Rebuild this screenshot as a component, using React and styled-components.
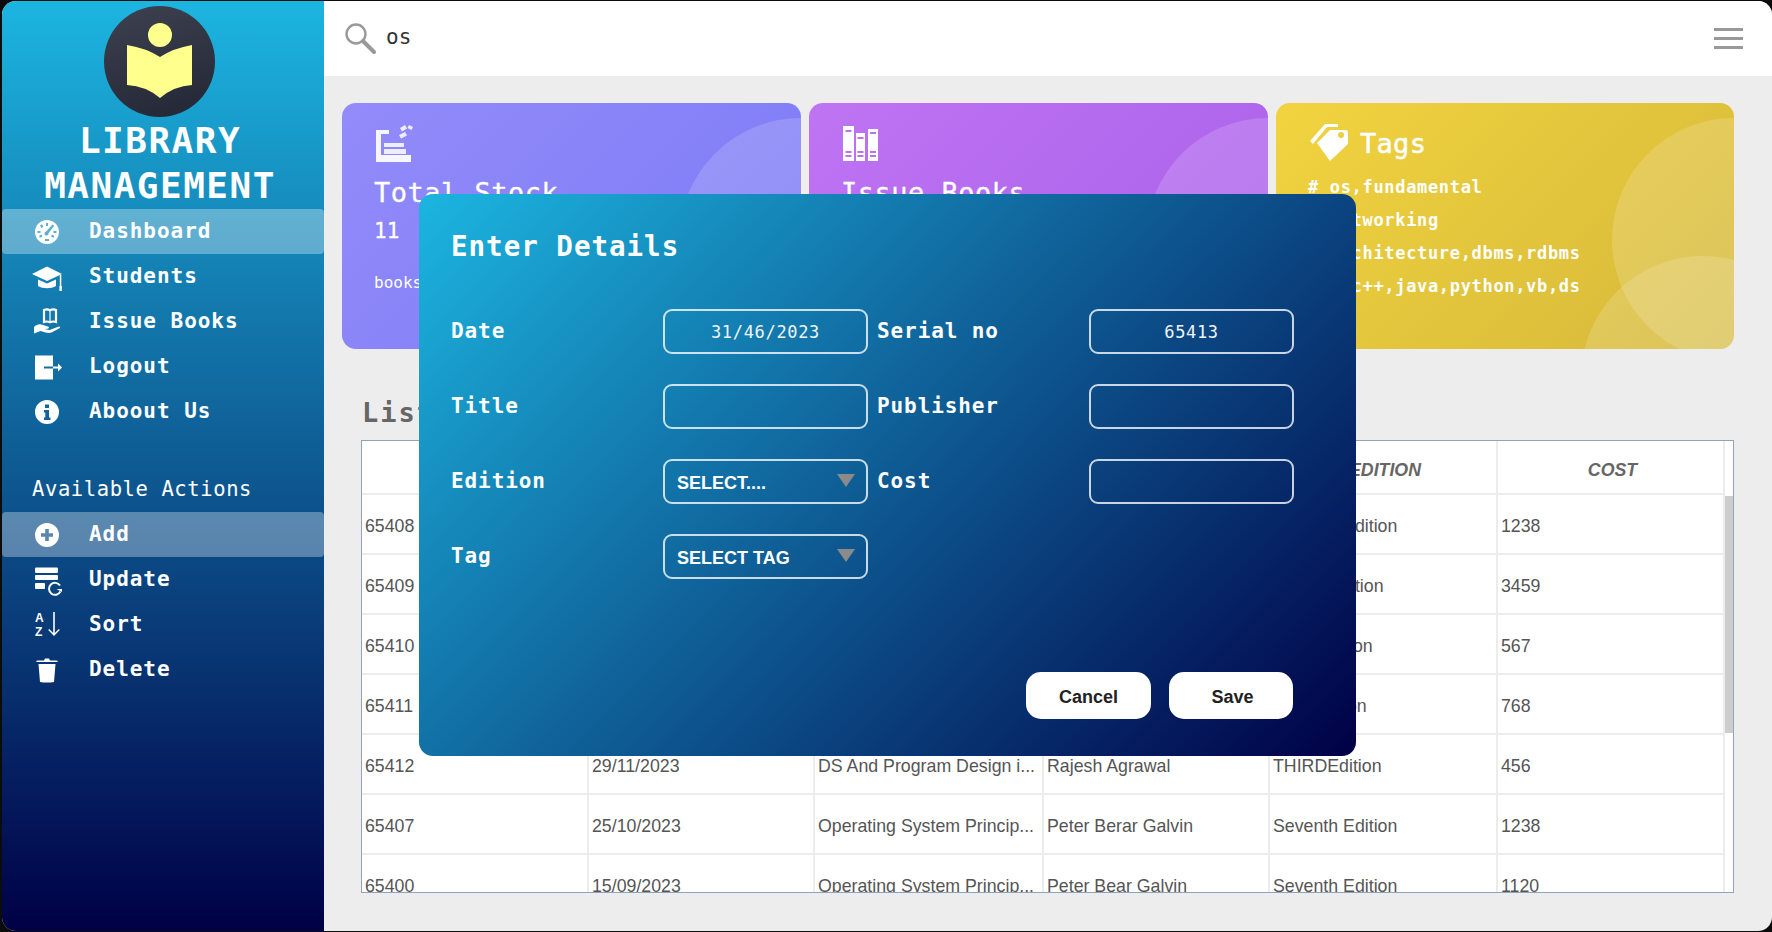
import React from "react";
import styled, { createGlobalStyle } from "styled-components";

const MONO = `"DejaVu Sans Mono", "Liberation Mono", monospace`;
const SANS = `"Liberation Sans", Arial, sans-serif`;

const Global = createGlobalStyle`
  html, body { margin: 0; padding: 0; background: #0c0c0c; height: 100%; overflow: hidden; }
  * { box-sizing: border-box; }
`;

const Frame = styled.div`
  position: relative;
  width: 1770px;
  height: 930px;
  margin: 1px 0 0 2px;
  border-radius: 14px;
  overflow: hidden;
  display: flex;
  background: #ededed;
  font-family: ${MONO};
`;

const Sidebar = styled.aside`
  width: 322px;
  flex: none;
  display: flex;
  flex-direction: column;
  color: #fff;
  background: linear-gradient(180deg, #1cb5e0 0%, #000046 100%);
`;

const LogoWrap = styled.div`
  display: flex;
  justify-content: center;
  padding: 5px 7px 0 0;
  height: 117px;
`;

const Brand = styled.h1`
  margin: 0;
  padding-right: 6px;
  font-size: 36px;
  line-height: 45px;
  height: 91px;
  font-weight: 700;
  letter-spacing: 1.5px;
  text-align: center;
`;

const MenuRow = styled.div`
  height: 45px;
  display: flex;
  align-items: center;
  gap: 28px;
  padding-left: 31px;
  border-radius: 4px;
  font-size: 21px;
  font-weight: 700;
  letter-spacing: 0.95px;
  background: ${(p) => (p.$active ? "rgba(255,255,255,0.32)" : "transparent")};
  span { position: relative; top: -1px; }
`;

const IconBox = styled.svg`
  width: 28px;
  height: 28px;
  flex: none;
  fill: #fff;
  overflow: visible;
`;

const SectionLabel = styled.div`
  margin-top: 43px;
  padding: 0 0 11px 30px;
  font-size: 20.5px;
  line-height: 24px;
  letter-spacing: 0.6px;
`;

const Main = styled.main`
  flex: 1;
  min-width: 0;
  display: flex;
  flex-direction: column;
`;

const Header = styled.header`
  height: 75px;
  flex: none;
  background: #fff;
  display: flex;
  align-items: center;
  justify-content: space-between;
  padding: 0 29px 0 20px;
`;

const Search = styled.div`
  display: flex;
  align-items: center;
  gap: 10px;
  color: #333;
  font-size: 21px;
  span { position: relative; top: -2px; }
`;

const Burger = styled.div`
  width: 29px;
  height: 21px;
  display: flex;
  flex-direction: column;
  justify-content: space-between;
  i { display: block; height: 3px; background: #999; }
`;

const Content = styled.div`
  flex: 1;
  padding: 27px 36px 0 18px;
`;

const Cards = styled.div`
  display: grid;
  grid-template-columns: 459px 459px 458px;
  gap: 8px;
`;

const Card = styled.section`
  position: relative;
  height: 246px;
  border-radius: 14px;
  overflow: hidden;
  color: #fff;
  padding: 21px 0 0 32px;
  background: ${(p) => p.$bg};
`;

const Bubble = styled.div`
  position: absolute;
  width: 244px;
  height: 244px;
  border-radius: 50%;
  background: rgba(255, 255, 255, 0.16);
  top: ${(p) => p.$top}px;
  right: ${(p) => p.$right}px;
`;

const CardIcon = styled.svg`
  display: block;
  margin-left: 1px;
  width: 38px;
  height: 40px;
  fill: #fff;
`;

const CardTitle = styled.div`
  margin-top: 9px;
  font-size: 27px;
  line-height: 40px;
  letter-spacing: 0.5px;
  -webkit-text-stroke: 0.3px #fff;
`;

const CardValue = styled.div`
  margin-top: 5px;
  font-size: 21px;
  line-height: 26px;
  -webkit-text-stroke: 0.3px #fff;
`;

const CardNote = styled.div`
  margin-top: 27px;
  font-size: 16px;
  line-height: 24px;
`;

const TagHead = styled.div`
  display: flex;
  align-items: center;
  gap: 11px;
  margin: 0 0 0 2px;
  svg { width: 39px; height: 39px; fill: #fff; flex: none; }
  span { font-size: 27px; letter-spacing: 0.3px; -webkit-text-stroke: 0.5px #fff; }
`;

const TagList = styled.div`
  margin: 8px 0 0 0;
  font-size: 17px;
  font-weight: 700;
  line-height: 33px;
  letter-spacing: 0.67px;
`;

const ListHeading = styled.h2`
  margin: 47px 0 10px 20px;
  font-size: 27px;
  line-height: 34px;
  font-weight: 700;
  letter-spacing: 2px;
  color: #666;
`;

const TableBox = styled.div`
  width: 1373px;
  height: 453px;
  margin-left: 19px;
  border: 1px solid #8fa3bb;
  background: #fff;
  display: flex;
  overflow: hidden;
  font-family: ${SANS};
`;

const TableBody = styled.div`
  width: 1363px;
  flex: none;
`;

const Row = styled.div`
  display: grid;
  grid-template-columns: 227px 226px 229px 226px 228px 227px;
  height: ${(p) => (p.$head ? "54px" : "60px")};
  border-bottom: 2px solid #ececec;
`;

const Cell = styled.div`
  display: flex;
  align-items: center;
  padding: 4px 0 0 3px;
  border-right: 2px solid #ececec;
  font-size: 17.75px;
  color: #555;
  white-space: nowrap;
  overflow: hidden;
`;

const HeadCell = styled(Cell)`
  justify-content: center;
  padding: 7px 0 0 4px;
  font-weight: 700;
  font-style: italic;
  color: #666;
`;

const Scrollbar = styled.div`
  flex: 1;
  padding-top: 55px;
  i { display: block; width: 100%; height: 237px; background: #cdcdcd; }
`;

const Modal = styled.div`
  position: absolute;
  left: 417px;
  top: 193px;
  width: 937px;
  height: 562px;
  border-radius: 14px;
  padding: 35px 63px 37px 32px;
  display: flex;
  flex-direction: column;
  color: #fff;
  background: linear-gradient(135deg, #1cb5e0 0%, #000046 100%);
`;

const ModalTitle = styled.h3`
  margin: 0 0 46px;
  font-size: 27.5px;
  line-height: 34px;
  font-weight: 700;
  letter-spacing: 1px;
`;

const Form = styled.div`
  display: grid;
  grid-template-columns: 212px 214px 212px 205px;
  grid-auto-rows: 45px;
  row-gap: 30px;
`;

const Label = styled.label`
  align-self: center;
  position: relative;
  top: -1px;
  font-size: 21px;
  font-weight: 700;
  letter-spacing: 0.9px;
`;

const Input = styled.input`
  width: 205px;
  height: 45px;
  border: 2px solid rgba(255, 255, 255, 0.78);
  border-radius: 9px;
  background: transparent;
  outline: none;
  color: #eef4f8;
  text-align: center;
  font-family: ${MONO};
  font-size: 17px;
  letter-spacing: 0.67px;
`;

const SelectBox = styled.div`
  width: 205px;
  height: 45px;
  border: 2px solid rgba(255, 255, 255, 0.78);
  border-radius: 9px;
  display: flex;
  align-items: center;
  justify-content: space-between;
  padding: 3px 11px 0 12px;
  font-family: ${SANS};
  font-weight: 700;
  font-size: 18px;
  &::after {
    content: "";
    margin-top: -5px;
    border-left: 9px solid transparent;
    border-right: 9px solid transparent;
    border-top: 13px solid #8a8a8a;
  }
`;

const Actions = styled.div`
  margin-top: auto;
  display: flex;
  justify-content: flex-end;
  gap: 18px;
`;

const Button = styled.button`
  width: ${(p) => p.$w}px;
  height: 47px;
  border: none;
  border-radius: 15px;
  padding: 4px 0 0 ${(p) => p.$shift || 0}px;
  background: #fff;
  color: #222;
  font-family: ${SANS};
  font-weight: 700;
  font-size: 18px;
`;

const Logo = () => (
  <svg width="111" height="111" viewBox="0 0 111 111">
    <defs>
      <linearGradient id="lg" x1="0.3" y1="0" x2="0.6" y2="1">
        <stop offset="0" stopColor="#3b3f4e" />
        <stop offset="1" stopColor="#252937" />
      </linearGradient>
    </defs>
    <circle cx="55.5" cy="55.5" r="55.5" fill="url(#lg)" />
    <circle cx="56" cy="29" r="12" fill="#ffff8d" />
    <path d="M23 39Q42 42 56 51Q70 42 88 39V79Q70 80 56 92Q42 80 23 79Z" fill="#ffff8d" />
  </svg>
);

const icons = {
  gauge: (
    <path fillRule="evenodd" d="M14 2a12 12 0 1 0 0 24a12 12 0 1 0 0-24zM13 5h2v3h-2zM7 7.500l2-1.200 1.400 2.400-2 1.200zM4.500 13h3v2h-3zM20.500 13h3v2h-3zM6 18l2.400-1.400 1 1.800L7 19.800zM19 16.600l2.400 1.400-1 1.800-2.400-1.400zM12 21h4v2h-4zM19.500 6.500l1.600 1.200-5.600 7.600a2 2 0 1 1-2.400-1.700z" />
  ),
  cap: (
    <>
      <path d="M-1 11L14 3.500 29 11 14 18z" />
      <path d="M5 16.500l9 4 9-4v6.500c-5 3-13 3-18 0z" />
      <rect x="26.800" y="12" width="1.500" height="11" />
      <rect x="26.400" y="23" width="2.400" height="5" />
    </>
  ),
  hand: (
    <>
      <path d="M11 2c2-1 4-1 6 .3c2-1.300 4-1.300 6-.3v12c-2-.8-4-.6-6 .3c-2-.9-4-1.100-6-.3z" fill="none" stroke="#fff" strokeWidth="2.200" />
      <path d="M17 2v12" stroke="#fff" strokeWidth="1.200" />
      <path d="M1 19c3-3 6-3.500 9-2l5 1.500c1.500.5 1.200 2.300-.5 2.300l-3 .2 5 1 9.500-3.500c1.500 0 1.500 1 .5 1.700l-8 4.300c-2 .7-4 .5-6 0l-5-1.500-6.500 2.500z" />
    </>
  ),
  logout: (
    <>
      <path fillRule="evenodd" d="M2 2.500h18v11h-9v2h9v11H2z" />
      <path d="M20 13.500h5v-3l4 4-4 4v-3h-5z" />
    </>
  ),
  info: (
    <path fillRule="evenodd" d="M14 2a12 12 0 1 0 0 24a12 12 0 1 0 0-24zM12 6.500h4v3.500h-4zM11 12h5v7.500h1.500V22h-6.500v-2.500h1.300V14.500H11z" />
  ),
  add: (
    <path fillRule="evenodd" d="M14 2a12 12 0 1 0 0 24a12 12 0 1 0 0-24zM12.200 8h3.600v4.200H20v3.600h-4.200V20h-3.600v-4.200H8v-3.600h4.200z" />
  ),
  update: (
    <>
      <rect x="2" y="1.500" width="23" height="5.500" rx="1.200" />
      <rect x="2" y="9" width="23" height="5" rx="1" />
      <rect x="2" y="17" width="10" height="6" rx="1" />
      <path d="M27 19.500a6 6 0 1 0 .4 6" fill="none" stroke="#fff" strokeWidth="2" />
      <path d="M29 23h-5.500l5.500 3z" />
    </>
  ),
  sort: (
    <>
      <text x="2" y="11" fontFamily={SANS} fontWeight="700" fontSize="12" fill="#fff">A</text>
      <text x="2" y="25" fontFamily={SANS} fontWeight="700" fontSize="12" fill="#fff">Z</text>
      <path d="M20.200 1h1.600v21l4-4 1 1-5.800 6-5.800-6 1-1 4 4z" />
    </>
  ),
  trash: (
    <>
      <path d="M3 6l1-1.500h7l1-2h4l1 2h7l1 1.500z" />
      <path d="M5.500 8h17l-1.500 18c-4 .8-10 .8-14 0z" />
    </>
  ),
};

const Icon = ({ name }) => <IconBox viewBox="0 0 28 28">{icons[name]}</IconBox>;

const menuA = [
  ["gauge", "Dashboard", true],
  ["cap", "Students"],
  ["hand", "Issue Books"],
  ["logout", "Logout"],
  ["info", "Aboout Us"],
];
const menuB = [
  ["add", "Add", true],
  ["update", "Update"],
  ["sort", "Sort"],
  ["trash", "Delete"],
];

const rows = [
  ["65408", "12/10/2023", "Operating System Princip...", "Peter Berar Galvin", "Seventh Edition", "1238"],
  ["65409", "14/10/2023", "Computer Networking", "Andrew Tanenbaum", "Fourth Edition", "3459"],
  ["65410", "18/10/2023", "Computer Architecture", "Morris Mano", "Third Edition", "567"],
  ["65411", "20/10/2023", "Database Systems", "Henry Korth", "First Edition", "768"],
  ["65412", "29/11/2023", "DS And Program Design i...", "Rajesh Agrawal", "THIRDEdition", "456"],
  ["65407", "25/10/2023", "Operating System Princip...", "Peter Berar Galvin", "Seventh Edition", "1238"],
  ["65400", "15/09/2023", "Operating System Princip...", "Peter Bear Galvin", "Seventh Edition", "1120"],
];

const MenuList = ({ items }) =>
  items.map(([icon, text, active]) => (
    <MenuRow key={text} $active={active}>
      <Icon name={icon} />
      <span>{text}</span>
    </MenuRow>
  ));

export default function App() {
  return (
    <>
      <Global />
      <Frame>
        <Sidebar>
          <LogoWrap>
            <Logo />
          </LogoWrap>
          <Brand>
            LIBRARY
            <br />
            MANAGEMENT
          </Brand>
          <MenuList items={menuA} />
          <SectionLabel>Available Actions</SectionLabel>
          <MenuList items={menuB} />
        </Sidebar>
        <Main>
          <Header>
            <Search>
              <svg width="32" height="32" viewBox="0 0 32 32" fill="none" stroke="#999">
                <circle cx="12" cy="11" r="9.500" strokeWidth="2.400" />
                <path d="M19 18l11 11" strokeWidth="4" strokeLinecap="round" />
              </svg>
              <span>os</span>
            </Search>
            <Burger>
              <i />
              <i />
              <i />
            </Burger>
          </Header>
          <Content>
            <Cards>
              <Card $bg="linear-gradient(135deg, #938bfa 0%, #7b7af5 100%)">
                <Bubble $top={15} $right={-122} />
                <CardIcon viewBox="0 0 38 40">
                  <path d="M1 6h13v4H6v21h30v7H1z" opacity="0.92" />
                  <path d="M9 19h20v4H9zM9 25h22v5H9z" opacity="0.85" />
                  <path d="M25 4l5-3 2 3.500-5 3zM34 1l4 2-1.500 3-4-2zM24 11l6-3 2 3.500-6 3z" opacity="0.85" />
                </CardIcon>
                <CardTitle>Total Stock</CardTitle>
                <CardValue>11</CardValue>
                <CardNote>books in stock</CardNote>
              </Card>
              <Card $bg="linear-gradient(135deg, #bf74f3 0%, #a95fe9 100%)">
                <Bubble $top={15} $right={-122} />
                <CardIcon viewBox="0 0 38 40">
                  <path fillRule="evenodd" d="M1 2h11v35H1zM3.500 6v2h6V6zM3.500 27v2h6v-2zM3.500 31v2h6v-2z" />
                  <path fillRule="evenodd" d="M14 9h9v28h-9zM15.500 13v2h6v-2zM15.500 27v2h6v-2zM15.500 31v2h6v-2z" />
                  <path fillRule="evenodd" d="M26 5h10v32H26zM28 8v2h6V8zM28 27v2h6v-2zM28 31v2h6v-2z" />
                </CardIcon>
                <CardTitle>Issue Books</CardTitle>
                <CardValue>4</CardValue>
                <CardNote>books issued</CardNote>
              </Card>
              <Card $bg="linear-gradient(135deg, #f2d33f 0%, #d5b83a 100%)">
                <Bubble $top={15} $right={-122} />
                <Bubble $top={153} $right={-91} />
                <TagHead>
                  <svg viewBox="0 0 39 39">
                    <path fillRule="evenodd" d="M7 19L20 6h15q3 0 3 3v11L20 37zM31 8a3 3 0 1 0 0 6a3 3 0 1 0 0-6z" />
                    <path d="M0 17L15 0h13v3H17L3 20z" />
                  </svg>
                  <span>Tags</span>
                </TagHead>
                <TagList>
                  <div># os,fundamental</div>
                  <div># networking</div>
                  <div># architecture,dbms,rdbms</div>
                  <div># c,c++,java,python,vb,ds</div>
                </TagList>
              </Card>
            </Cards>
            <ListHeading>List Of Books</ListHeading>
            <TableBox>
              <TableBody>
                <Row $head>
                  {["S.NO", "DATE", "TITLE", "PUBLISHER", "EDITION", "COST"].map((h) => (
                    <HeadCell key={h}>{h}</HeadCell>
                  ))}
                </Row>
                {rows.map((r) => (
                  <Row key={r[0]}>
                    {r.map((c, i) => (
                      <Cell key={i}>{c}</Cell>
                    ))}
                  </Row>
                ))}
              </TableBody>
              <Scrollbar>
                <i />
              </Scrollbar>
            </TableBox>
          </Content>
        </Main>
        <Modal>
          <ModalTitle>Enter Details</ModalTitle>
          <Form>
            <Label>Date</Label>
            <Input readOnly value="31/46/2023" />
            <Label>Serial no</Label>
            <Input readOnly value="65413" />
            <Label>Title</Label>
            <Input readOnly />
            <Label>Publisher</Label>
            <Input readOnly />
            <Label>Edition</Label>
            <SelectBox>SELECT....</SelectBox>
            <Label>Cost</Label>
            <Input readOnly />
            <Label>Tag</Label>
            <SelectBox>SELECT TAG</SelectBox>
          </Form>
          <Actions>
            <Button $w={125}>Cancel</Button>
            <Button $w={124} $shift={3}>Save</Button>
          </Actions>
        </Modal>
      </Frame>
    </>
  );
}
